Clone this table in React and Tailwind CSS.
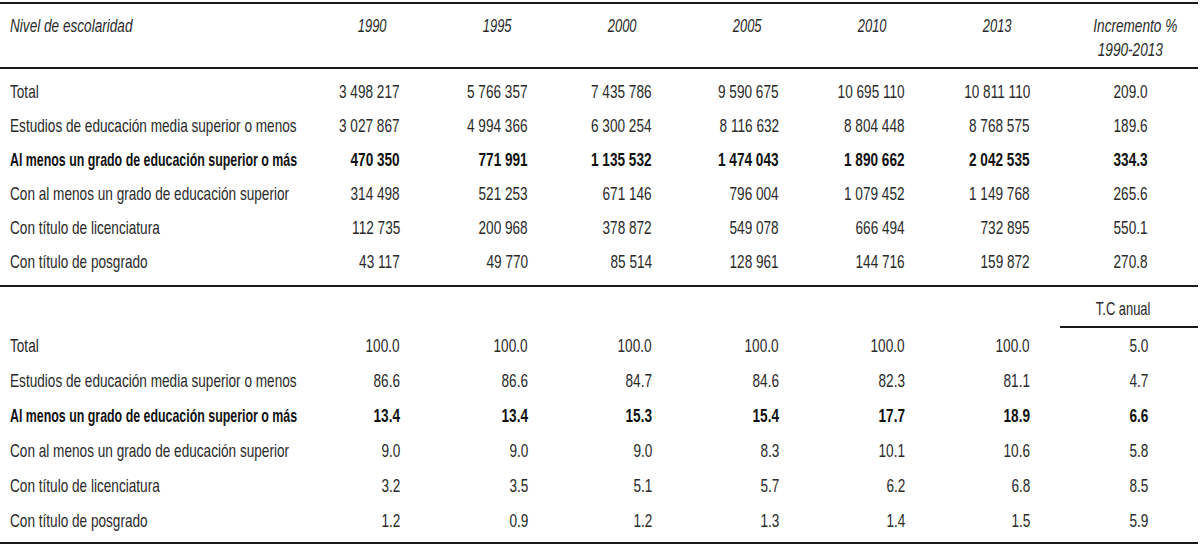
import React from "react";

const GRID =
  "grid grid-cols-[310px_125px_125px_125px_125px_125px_125px_138px]";

const PR = ["pr-[35px]", "pr-[32px]", "pr-[33px]", "pr-[31px]", "pr-[30px]", "pr-[30px]", "pr-[50px]"];

const top = [
  ["Total", ["3 498 217", "5 766 357", "7 435 786", "9 590 675", "10 695 110", "10 811 110", "209.0"], false],
  ["Estudios de educación media superior o menos", ["3 027 867", "4 994 366", "6 300 254", "8 116 632", "8 804 448", "8 768 575", "189.6"], false],
  ["Al menos un grado de educación superior o más", ["470 350", "771 991", "1 135 532", "1 474 043", "1 890 662", "2 042 535", "334.3"], true],
  ["Con al menos un grado de educación superior", ["314 498", "521 253", "671 146", "796 004", "1 079 452", "1 149 768", "265.6"], false],
  ["Con título de licenciatura", ["112 735", "200 968", "378 872", "549 078", "666 494", "732 895", "550.1"], false],
  ["Con título de posgrado", ["43 117", "49 770", "85 514", "128 961", "144 716", "159 872", "270.8"], false],
];

const bottom = [
  ["Total", ["100.0", "100.0", "100.0", "100.0", "100.0", "100.0", "5.0"], false],
  ["Estudios de educación media superior o menos", ["86.6", "86.6", "84.7", "84.6", "82.3", "81.1", "4.7"], false],
  ["Al menos un grado de educación superior o más", ["13.4", "13.4", "15.3", "15.4", "17.7", "18.9", "6.6"], true],
  ["Con al menos un grado de educación superior", ["9.0", "9.0", "9.0", "8.3", "10.1", "10.6", "5.8"], false],
  ["Con título de licenciatura", ["3.2", "3.5", "5.1", "5.7", "6.2", "6.8", "8.5"], false],
  ["Con título de posgrado", ["1.2", "0.9", "1.2", "1.3", "1.4", "1.5", "5.9"], false],
];

function L({ children, bold }) {
  return (
    <span
      className={`inline-block whitespace-nowrap origin-left ${
        bold ? "scale-x-[0.652]" : "scale-x-[0.716]"
      }`}
    >
      {children}
    </span>
  );
}
function R({ children }) {
  return <span className="inline-block whitespace-nowrap scale-x-[0.716] origin-right">{children}</span>;
}
function C({ children }) {
  return <span className="inline-block whitespace-nowrap scale-x-[0.68] origin-center">{children}</span>;
}

function Row({ label, values, bold, h }) {
  return (
    <div className={`${GRID} ${h} items-center ${bold ? "font-bold text-[#111111]" : ""}`}>
      <div className="pl-[10px] whitespace-nowrap">
        <L bold={bold}>{label}</L>
      </div>
      {values.map((v, i) => (
        <div key={i} className={`text-right whitespace-nowrap ${PR[i]}`}>
          <R>{v}</R>
        </div>
      ))}
    </div>
  );
}

export default function App() {
  const years = ["1990", "1995", "2000", "2005", "2010", "2013"];
  return (
    <div className="w-[1200px] h-[551px] bg-white pt-[2px] text-[#2a2a2a] font-['Liberation_Sans',Arial,sans-serif] text-[19px] leading-[24px]">
      <div className="w-[1198px] border-t-2 border-[#1a1a1a]">
        {/* header */}
        <div className={`${GRID} h-[65px] pt-[10px] italic border-b-2 border-[#1a1a1a]`}>
          <div className="pl-[10px] whitespace-nowrap">
            <L>Nivel de escolaridad</L>
          </div>
          {years.map((y) => (
            <div key={y} className="text-center whitespace-nowrap">
              <C>{y}</C>
            </div>
          ))}
          <div className="text-right pr-[35px] whitespace-nowrap">
            <div>
              <R>Incremento %</R>
            </div>
            <div>
              <R>1990-2013</R>
            </div>
          </div>
        </div>

        {/* section 1 */}
        <div className="pt-[6px] pb-[6px] border-b-2 border-[#1a1a1a]">
          {top.map(([l, v, b], i) => (
            <Row key={i} label={l} values={v} bold={b} h="h-[34px]" />
          ))}
        </div>

        {/* T.C anual */}
        <div className={`${GRID} h-[41px]`}>
          <div className="col-start-8 border-b-2 border-[#1a1a1a] pt-[10px] text-center pr-[12px] whitespace-nowrap">
            <C>T.C anual</C>
          </div>
        </div>

        {/* section 2 */}
        <div className="pb-[4px] border-b-2 border-[#1a1a1a]">
          {bottom.map(([l, v, b], i) => (
            <Row key={i} label={l} values={v} bold={b} h="h-[35px]" />
          ))}
        </div>
      </div>
    </div>
  );
}
